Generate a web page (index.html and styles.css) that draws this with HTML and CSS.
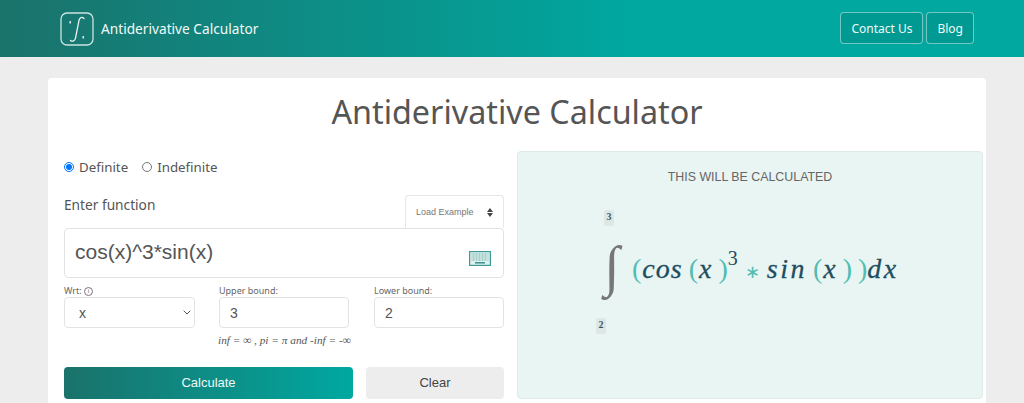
FILE: index.html
```html
<!DOCTYPE html>
<html lang="en">
<head>
    <meta charset="utf-8">
    <title>Antiderivative Calculator</title>
    <link rel="stylesheet" href="styles.css">
</head>
<body>
    <div class="page">
        <header class="navbar">
            <a class="brand" href="#">
                <svg class="logo" viewBox="0 0 34 34" width="34" height="34">
                    <rect x="1" y="1" width="32" height="32" rx="6" fill="none" stroke="#c9e4e1" stroke-width="1.3"/>
                    <path d="M24 6.5c-2-2-4.5-1-5 2L15.5 26c-.5 3-3 4-5 2.5" fill="none" stroke="#e8f5f3" stroke-width="1.3" stroke-linecap="round"/>
                    <path d="M9.5 9h1.5v2.5H9.5zM22.5 24h1.5v2.5h-1.5z" fill="#dcefec"/>
                </svg>
                <span class="brandname">Antiderivative Calculator</span>
            </a>
            <nav class="navlinks">
                <a class="navbtn" href="#">Contact Us</a>
                <a class="navbtn" href="#">Blog</a>
            </nav>
        </header>

        <main class="card">
            <h1 class="title">Antiderivative Calculator</h1>
            <div class="columns">
                <form class="calc">
                    <div class="radios">
                        <label class="radio"><input type="radio" name="kind" checked> Definite</label>
                        <label class="radio"><input type="radio" name="kind"> Indefinite</label>
                    </div>
                    <div class="fnhead">
                        <label class="fnlabel" for="fn">Enter function</label>
                        <div class="examples">
                            <span>Load Example</span>
                            <span class="carets"><i class="up"></i><i class="down"></i></span>
                        </div>
                    </div>
                    <div class="fnbox">
                        <input type="text" id="fn" value="cos(x)^3*sin(x)">
                        <svg class="keyboard" viewBox="0 0 22 15" width="22" height="15">
                            <rect x=".6" y=".6" width="20.8" height="13.8" fill="#dff0ee" stroke="#3f9a97" stroke-width="1.2"/>
                            <path d="M2.5 3h17M2.5 5h17M2.5 7h17M2.5 9h17" stroke="#6fb0ad" stroke-width="1.1" stroke-dasharray="1 .5"/>
                            <rect x="6" y="11" width="10" height="1.6" fill="#3f9a97"/>
                        </svg>
                    </div>
                    <div class="fields">
                        <div class="field field-wrt">
                            <label for="wrt">Wrt: <span class="info">i</span></label>
                            <div class="selectwrap">
                                <select id="wrt"><option>x</option><option>y</option></select>
                                <svg class="chevron" viewBox="0 0 8 5" width="8" height="5">
                                    <path d="M.7.7 4 4 7.3.7" fill="none" stroke="#555" stroke-width="1"/>
                                </svg>
                            </div>
                        </div>
                        <div class="field">
                            <label for="upper">Upper bound:</label>
                            <input type="text" id="upper" value="3">
                        </div>
                        <div class="field">
                            <label for="lower">Lower bound:</label>
                            <input type="text" id="lower" value="2">
                        </div>
                    </div>
                    <p class="hint">inf = ∞ , pi = π and -inf = -∞</p>
                    <div class="actions">
                        <button type="button" class="btn-calc">Calculate</button>
                        <button type="button" class="btn-clear">Clear</button>
                    </div>
                </form>

                <section class="preview">
                    <h2 class="previewtitle">THIS WILL BE CALCULATED</h2>
                    <div class="limit limit-up">3</div>
                    <div class="formula">
                        <span class="integral">∫</span>
                        <span class="open">(</span><span class="fname">cos</span>
                        <span class="open">(</span><span class="fname">x</span>
                        <span class="close">)</span><sup class="power">3</sup>
                        <span class="star">∗</span>
                        <span class="fname wide">sin</span>
                        <span class="open">(</span><span class="fname">x</span>
                        <span class="close">)</span>
                        <span class="close">)</span><span class="fname wide">dx</span>
                    </div>
                    <div class="limit limit-down">2</div>
                </section>
            </div>
        </main>
    </div>
</body>
</html>
```

FILE: styles.css
```css
html, body {
    margin: 0;
    padding: 0;
}

body {
    background-color: #ededed;
    font-family: "Noto Sans", Arial, sans-serif;
    color: #555;
}

.page {
    height: 403px;
    overflow: hidden;
}

.navbar {
    height: 57px;
    box-sizing: border-box;
    padding: 12px 50px 0 60px;
    display: flex;
    justify-content: space-between;
    background: linear-gradient(90deg, #1a726b 0%, #00a8a0 62%);
}

.brand {
    display: flex;
    align-items: center;
    height: 34px;
    gap: 7px;
    color: #f2f9f8;
    font-size: 13.7px;
    text-decoration: none;
}

.brandname {
    margin-bottom: 2px;
}

.navlinks {
    display: flex;
    gap: 3px;
    align-items: flex-start;
}

.navbtn {
    height: 32px;
    line-height: 32px;
    box-sizing: border-box;
    padding: 0 10px;
    border: 1px solid rgba(255, 255, 255, 0.45);
    border-radius: 4px;
    background-color: #009a92;
    color: #f2f9f8;
    font-size: 12px;
    text-decoration: none;
}

.card {
    margin: 21px 38px 0 48px;
    height: 400px;
    padding: 0 3px 0 16px;
    background-color: #fff;
    border-radius: 4px;
}

.title {
    margin: 0 13px 0 0;
    padding-top: 10px;
    height: 62px;
    box-sizing: border-box;
    text-align: center;
    font-size: 32.3px;
    font-weight: 400;
    line-height: 46px;
    color: #555;
}

.columns {
    margin-top: 11px;
    display: flex;
    gap: 13px;
}

.calc {
    width: 440px;
    flex: none;
}

.radios {
    display: flex;
    gap: 14px;
    height: 44px;
    box-sizing: border-box;
}

.radio {
    height: 32px;
    font-size: 13.3px;
    display: flex;
    align-items: center;
    gap: 5px;
}

.radio input {
    margin: 0;
    width: 10px;
    height: 10px;
}

.fnhead {
    display: flex;
    justify-content: space-between;
    height: 33px;
}

.fnlabel {
    font-size: 13.7px;
    line-height: 20px;
}

.examples {
    width: 99px;
    box-sizing: border-box;
    border: 1px solid #e6e6e6;
    border-bottom: none;
    border-radius: 4px 4px 0 0;
    padding: 0 10px;
    display: flex;
    align-items: center;
    justify-content: space-between;
    font-family: "Liberation Sans", Arial, sans-serif;
    font-size: 9px;
    color: #777;
}

.carets i {
    display: block;
    width: 0;
    height: 0;
    border-left: 3.5px solid transparent;
    border-right: 3.5px solid transparent;
}

.carets .up {
    border-bottom: 4px solid #444;
    margin-bottom: 1px;
}

.carets .down {
    border-top: 4px solid #444;
}

.fnbox {
    height: 50px;
    box-sizing: border-box;
    border: 1px solid #e3e3e3;
    border-radius: 4px;
    padding: 0 12px 0 10px;
    display: flex;
    align-items: center;
    gap: 4px;
}

.fnbox input {
    flex: 1;
    min-width: 0;
    border: none;
    outline: none;
    padding: 0 0 2px 0;
    font-family: "Liberation Sans", Arial, sans-serif;
    font-size: 21px;
    color: #555;
}

.keyboard {
    flex: none;
    margin-top: 10px;
}

.fields {
    margin-top: 6px;
    display: flex;
    gap: 24px;
}

.field {
    width: 130px;
    display: flex;
    flex-direction: column;
}

.field-wrt {
    width: 131px;
}

.field:last-child {
    margin-left: 1px;
}

.field label {
    font-size: 9px;
    line-height: 13px;
    color: #666;
}

.info {
    display: inline-block;
    width: 7px;
    height: 7px;
    line-height: 7px;
    border: 1px solid #777;
    border-radius: 50%;
    text-align: center;
    font-size: 6px;
    vertical-align: 1px;
}

.field input, .field select {
    height: 31px;
    width: 100%;
    box-sizing: border-box;
    border: 1px solid #e3e3e3;
    border-radius: 4px;
    background-color: #fff;
    font-family: "Liberation Sans", Arial, sans-serif;
    font-size: 14px;
    color: #555;
    padding: 0 10px;
    outline: none;
}

.selectwrap {
    position: relative;
}

.field select {
    display: block;
    appearance: none;
    padding: 0 14px;
}

.chevron {
    position: absolute;
    right: 4px;
    top: 13px;
}

.hint {
    margin: 6px 0 0 0;
    padding-left: 154px;
    height: 13px;
    font-family: "Liberation Serif", serif;
    font-style: italic;
    font-size: 11.3px;
    line-height: 13px;
    color: #555;
}

.actions {
    margin-top: 20px;
    display: flex;
    justify-content: space-between;
}

.actions button {
    height: 32px;
    border: none;
    border-radius: 4px;
    padding: 0 0 2px 0;
    font-family: "Liberation Sans", Arial, sans-serif;
    font-size: 13px;
}

.btn-calc {
    width: 289px;
    background: linear-gradient(90deg, #1a726b, #00a8a0);
    color: #eef8f7;
}

.btn-clear {
    width: 138px;
    background-color: #ededed;
    color: #444;
}

.preview {
    width: 466px;
    height: 248px;
    box-sizing: border-box;
    border: 1px solid #dcebe8;
    border-radius: 4px;
    background-color: #e9f5f3;
}

.previewtitle {
    margin: 0;
    padding-top: 17px;
    height: 58px;
    box-sizing: border-box;
    text-align: center;
    font-family: "Liberation Sans", Arial, sans-serif;
    font-size: 12.4px;
    font-weight: 400;
    line-height: 16px;
    color: #666;
}

.limit {
    width: 10px;
    height: 16px;
    border-radius: 2px;
    background-color: #dde7e6;
    font-family: "Liberation Serif", serif;
    font-weight: 700;
    font-size: 10px;
    line-height: 14px;
    text-align: center;
    color: #3c5a66;
}

.limit-up {
    margin-left: 86px;
}

.limit-down {
    margin-left: 78px;
}

.formula {
    height: 92px;
    margin-left: 86px;
    display: flex;
    align-items: baseline;
    font-family: "Liberation Serif", serif;
    font-size: 28px;
    line-height: 85px;
    color: #1f4d5e;
    white-space: nowrap;
}

.integral {
    align-self: flex-start;
    font-size: 56px;
    line-height: 80px;
    font-style: italic;
    color: #777;
    width: 22px;
}

.open, .close {
    color: #4fbdb1;
}

.open {
    margin: 0 1px 0 6px;
}

.close {
    margin-left: 6px;
}

.fname {
    font-style: italic;
    letter-spacing: 1px;
    -webkit-text-stroke: 0.3px #1f4d5e;
}

.wide {
    letter-spacing: 2.5px;
}

.power {
    font-size: 20px;
    line-height: 0;
    position: relative;
    top: -13px;
    vertical-align: baseline;
}

.star {
    color: #4fbdb1;
    margin: 0 7px;
    font-size: 18px;
}
```
